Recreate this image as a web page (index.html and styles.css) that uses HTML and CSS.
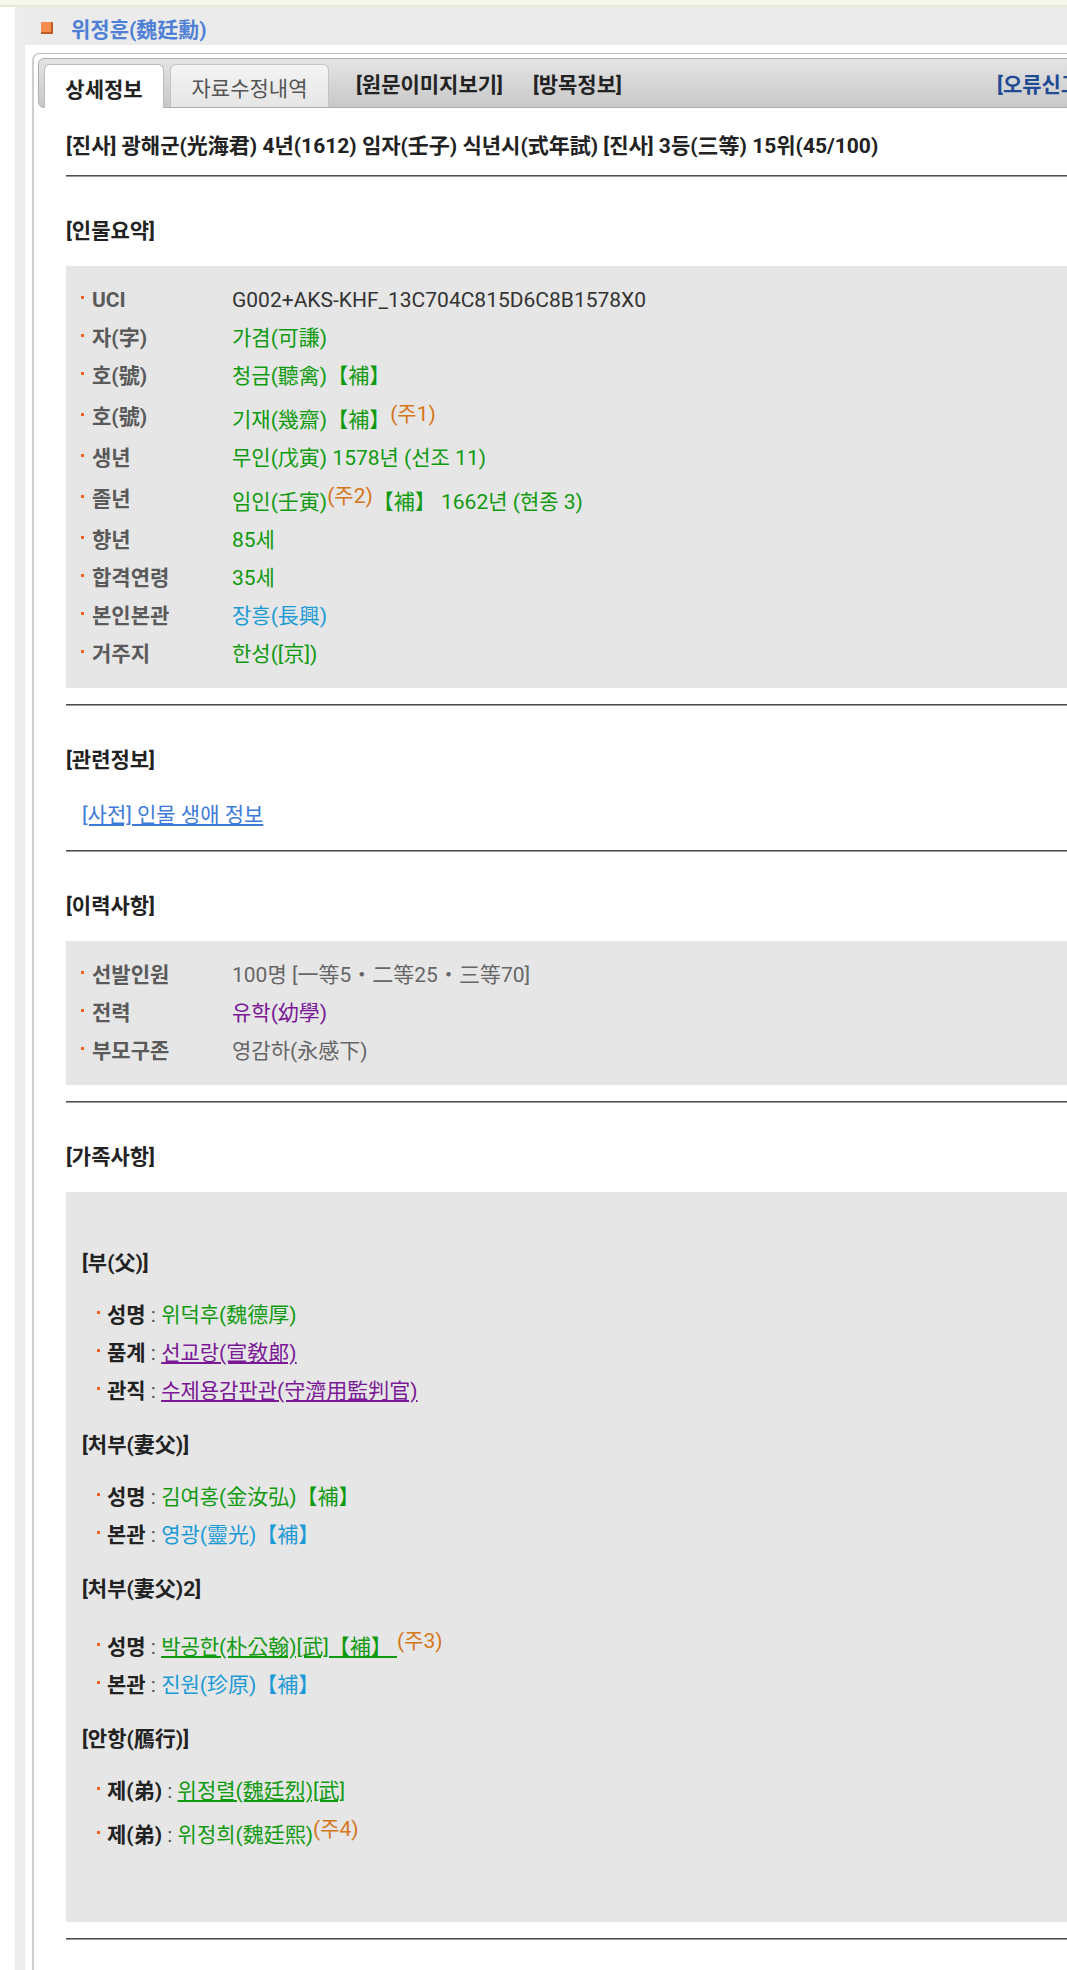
FILE: index.html
```html
<!DOCTYPE html>
<html lang="ko">
<head>
  <meta charset="UTF-8">
  <meta name="viewport" content="width=device-width, initial-scale=1.0">
  <title>위정훈(魏廷勳) | 방목 상세정보</title>
  <link rel="stylesheet" href="styles.css">
</head>
<body>
  <div class="topbar"></div>
  <div class="layout">
    <div class="rail"></div>
    <div class="main">
      <h1 class="title"><span class="mark"></span>위정훈(魏廷勳)</h1>
      <div class="panel">
        <div class="tabs">
          <a href="#" class="tab active">상세정보</a>
          <a href="#" class="tab">자료수정내역</a>
          <a href="#" class="tab-link first">[원문이미지보기]</a>
          <a href="#" class="tab-link">[방목정보]</a>
          <a href="#" class="tab-link report">[오류신고]</a>
        </div>
        <div class="content">
          <p class="exam">[진사] 광해군(光海君) 4년(1612) 임자(壬子) 식년시(式年試) [진사] 3등(三等) 15위(45/100)</p>
          <hr>

          <h3>[인물요약]</h3>
          <ul class="box facts">
            <li><span class="k">UCI</span><span class="plain">G002+AKS-KHF_13C704C815D6C8B1578X0</span></li>
            <li><span class="k">자(字)</span><span class="green">가겸(可謙)</span></li>
            <li><span class="k">호(號)</span><span class="green">청금(聽禽)【補】</span></li>
            <li><span class="k">호(號)</span><span><span class="green">기재(幾齋)【補】</span><sup class="note">(주1)</sup></span></li>
            <li><span class="k">생년</span><span class="green">무인(戊寅) 1578년 (선조 11)</span></li>
            <li><span class="k">졸년</span><span class="green">임인(壬寅)<sup class="note">(주2)</sup>【補】 1662년 (현종 3)</span></li>
            <li><span class="k">향년</span><span class="green">85세</span></li>
            <li><span class="k">합격연령</span><span class="green">35세</span></li>
            <li><span class="k">본인본관</span><span class="blue">장흥(長興)</span></li>
            <li><span class="k">거주지</span><span class="green">한성([京])</span></li>
          </ul>
          <hr>

          <h3>[관련정보]</h3>
          <p class="related"><a href="#">[사전] 인물 생애 정보</a></p>
          <hr>

          <h3>[이력사항]</h3>
          <ul class="box facts">
            <li><span class="k">선발인원</span><span class="gray">100명 [一等5・二等25・三等70]</span></li>
            <li><span class="k">전력</span><span class="purple">유학(幼學)</span></li>
            <li><span class="k">부모구존</span><span class="gray">영감하(永感下)</span></li>
          </ul>
          <hr>

          <h3>[가족사항]</h3>
          <div class="box family">
            <h4>[부(父)]</h4>
            <ul>
              <li><b>성명</b> : <span class="green">위덕후(魏德厚)</span></li>
              <li><b>품계</b> : <a href="#" class="purple u">선교랑(宣敎郞)</a></li>
              <li><b>관직</b> : <a href="#" class="purple u">수제용감판관(守濟用監判官)</a></li>
            </ul>
            <h4>[처부(妻父)]</h4>
            <ul>
              <li><b>성명</b> : <span class="green">김여홍(金汝弘)【補】</span></li>
              <li><b>본관</b> : <span class="blue">영광(靈光)【補】</span></li>
            </ul>
            <h4>[처부(妻父)2]</h4>
            <ul>
              <li><b>성명</b> : <a href="#" class="green u">박공한(朴公翰)[武]【補】 </a><sup class="note">(주3)</sup></li>
              <li><b>본관</b> : <span class="blue">진원(珍原)【補】</span></li>
            </ul>
            <h4>[안항(鴈行)]</h4>
            <ul>
              <li><b>제(弟)</b> : <a href="#" class="green u">위정렬(魏廷烈)[武]</a></li>
              <li><b>제(弟)</b> : <span class="green">위정희(魏廷熙)</span><sup class="note">(주4)</sup></li>
            </ul>
          </div>
          <hr>
        </div>
      </div>
    </div>
  </div>
</body>
</html>
```

FILE: styles.css
```css
* { box-sizing: border-box; }
html, body { margin: 0; padding: 0; }
body {
  background: #fff;
  color: #333;
  font-family: Roboto, "Noto Sans CJK KR", "Noto Sans", sans-serif;
  font-size: 21px;
  overflow: hidden;
}
a { text-decoration: none; }

.topbar {
  height: 7px;
  background: #f5f8eb;
  border-bottom: 2px solid #e4ead8;
}
.layout {
  display: flex;
  padding-left: 15px;
  min-height: 1963px;
}
.rail { flex: none; width: 10px; background: #ececec; }
.main { flex: none; width: 1080px; }

.title {
  display: flex;
  align-items: center;
  height: 38px;
  margin: 0;
  padding: 3px 0 0 16px;
  background: #ebebeb;
  color: #4f80d6;
  font-size: 21px;
  font-weight: bold;
}
.mark {
  width: 12px;
  height: 12px;
  margin-right: 18px;
  background: #f48c4e;
  border-right: 2px solid #bd5c24;
  border-bottom: 2px solid #bd5c24;
}

.panel {
  min-height: 1917px;
  margin: 8px 0 0 7px;
  padding: 4px 0 0 4px;
  border-top: 1px solid #bdbdbd;
  border-left: 2px solid #cfcfcf;
  border-top-left-radius: 7px;
}
.tabs {
  display: flex;
  align-items: flex-end;
  height: 50px;
  padding: 0 18px 0 5px;
  border: 1px solid #adadad;
  border-radius: 6px;
  background: linear-gradient(#e4e4e4, #c8c8c8);
}
.tab {
  display: flex;
  align-items: center;
  justify-content: center;
  height: 43px;
  padding-top: 2px;
  border: 1px solid #c4c4c4;
  border-bottom: none;
  border-radius: 6px 6px 0 0;
  font-size: 21px;
}
.tab.active {
  width: 120px;
  height: 44px;
  margin-bottom: -1px;
  background: #fff;
  border-color: #bcbcbc;
  color: #222;
  font-weight: bold;
}
.tab:not(.active) {
  width: 159px;
  margin-left: 6px;
  background: linear-gradient(#f4f4f4, #e5e5e5);
  color: #555;
}
.tab-link {
  align-self: center;
  margin-left: 30px;
  color: #222;
  font-size: 21px;
  font-weight: bold;
}
.tab-link.first { margin-left: 27px; }
.tab-link.report { margin-left: auto; color: #1f4a94; }

.content { padding: 23px 0 60px 28px; }
.exam {
  margin: 0;
  color: #222;
  font-size: 21px;
  font-weight: bold;
  line-height: 30px;
}
hr {
  height: 0;
  margin: 14px 0 0;
  border: 0;
  border-top: 1px solid #4d4d4d;
  border-bottom: 1px solid #9a9a9a;
}
.box + hr { margin-top: 16px; }
h3 {
  margin: 39px 0 20px;
  color: #222;
  font-size: 21px;
  line-height: 30px;
}

.box { margin: 0; background: #e6e6e6; list-style: none; }
.facts { padding: 15px 0 15px 15px; }
.facts li {
  display: grid;
  grid-template-columns: 151px auto;
  align-items: center;
  line-height: 38px;
}
.k { color: #5a5a5a; font-weight: bold; }
.k::before,
.family li::before {
  content: "";
  display: inline-block;
  width: 3px;
  height: 3px;
  margin-right: 8px;
  background: #f2601e;
  vertical-align: 8px;
}

.plain { color: #333; }
.green { color: #109a10; }
.blue { color: #1b9ad6; }
.purple { color: #7a1896; }
.gray { color: #666; }
.u { text-decoration: underline; }
sup.note {
  color: #d5761a;
  font-size: 100%;
  vertical-align: 6px;
}

.related {
  margin: 25px 0 20px;
  padding-left: 16px;
  line-height: 30px;
}
.related a { color: #3e7bd8; text-decoration: underline; }

.family { padding: 36px 0 68px 16px; }
.family h4 {
  margin: 20px 0 18px;
  color: #222;
  font-size: 21px;
  line-height: 30px;
}
.family ul { margin: 0; padding-left: 15px; list-style: none; }
.family li { line-height: 38px; color: #555; }
.family li::before { margin-right: 7px; }
.family b { color: #222; }
```
